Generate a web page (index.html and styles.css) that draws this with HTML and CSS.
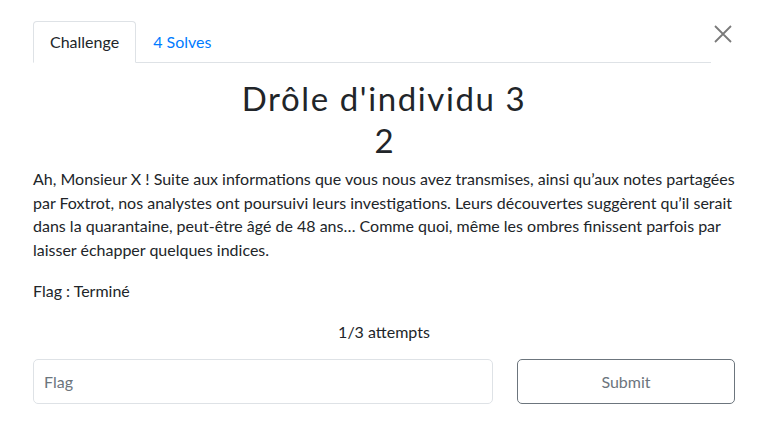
FILE: index.html
```html
<!DOCTYPE html>
<html lang="fr">
<head>
<meta charset="utf-8">
<link rel="stylesheet" href="styles.css">
</head>
<body>
<div class="modal">
  <div class="head">
    <ul class="tabs">
      <li class="tab active">Challenge</li>
      <li class="tab link">4 Solves</li>
    </ul>
    <button class="close" aria-label="Close">
      <svg width="18" height="18" viewBox="0 0 18 18"><path d="M1 1L17 17M17 1L1 17" stroke="#7a7a7a" stroke-width="1.8" fill="none"/></svg>
    </button>
  </div>
  <h2 class="title">Drôle d'individu 3</h2>
  <h3 class="value">2</h3>
  <p class="desc">Ah, Monsieur X ! Suite aux informations que vous nous avez transmises, ainsi qu’aux notes partagées par Foxtrot, nos analystes ont poursuivi leurs investigations. Leurs découvertes suggèrent qu’il serait dans la quarantaine, peut-être âgé de 48 ans… Comme quoi, même les ombres finissent parfois par laisser échapper quelques indices.</p>
  <p class="flag">Flag : Terminé</p>
  <p class="attempts">1/3 attempts</p>
  <div class="submit-row">
    <input class="input" type="text" placeholder="Flag">
    <button class="submit">Submit</button>
  </div>
</div>
</body>
</html>
```
FILE: styles.css
```css
html, body {
  margin: 0;
  padding: 0;
  background: #fff;
}
body {
  font-family: Lato, "Open Sans", sans-serif;
  font-size: 16px;
  line-height: 1.5;
  color: #212529;
}
.modal {
  padding: 21px 24px 0 33px;
}
.head {
  display: flex;
  align-items: flex-start;
}
.tabs {
  flex: 1;
  display: flex;
  list-style: none;
  margin: 0;
  padding: 0;
  border-bottom: 1px solid #dee2e6;
}
.tab {
  padding: 8px 16px;
  border: 1px solid transparent;
  border-radius: 4px 4px 0 0;
  margin-bottom: -1px;
}
.tab.active {
  border-color: #dee2e6 #dee2e6 #fff;
  background: #fff;
}
.tab.link {
  color: #007bff;
}
.close {
  border: 0;
  background: none;
  padding: 0;
  margin: 3px 3px 0 2px;
  width: 19px;
  height: 19px;
  display: flex;
  align-items: center;
  justify-content: center;
}
.title {
  margin: 14px 0 0;
  text-align: center;
  font-weight: 400;
  font-size: 33px;
  line-height: 42px;
  letter-spacing: 1.6px;
}
.value {
  margin: 0;
  text-align: center;
  font-weight: 400;
  font-size: 33px;
  line-height: 42px;
}
.desc {
  margin: 6px 0 18px;
  line-height: 23.5px;
}
.flag {
  margin: 0 0 17px;
}
.attempts {
  text-align: center;
  margin: 0 0 15px;
}
.submit-row {
  display: flex;
  gap: 24px;
}
.input {
  flex: 0 0 460px;
  box-sizing: border-box;
  height: 45px;
  border: 1px solid #dee2e6;
  border-radius: 5px;
  padding: 0 10px;
  font: inherit;
  color: #495057;
}
.input::placeholder {
  color: #6c757d;
}
.submit {
  flex: 1;
  height: 45px;
  border: 1px solid #6c757d;
  border-radius: 5px;
  background: #fff;
  color: #6c757d;
  font: inherit;
}
```
